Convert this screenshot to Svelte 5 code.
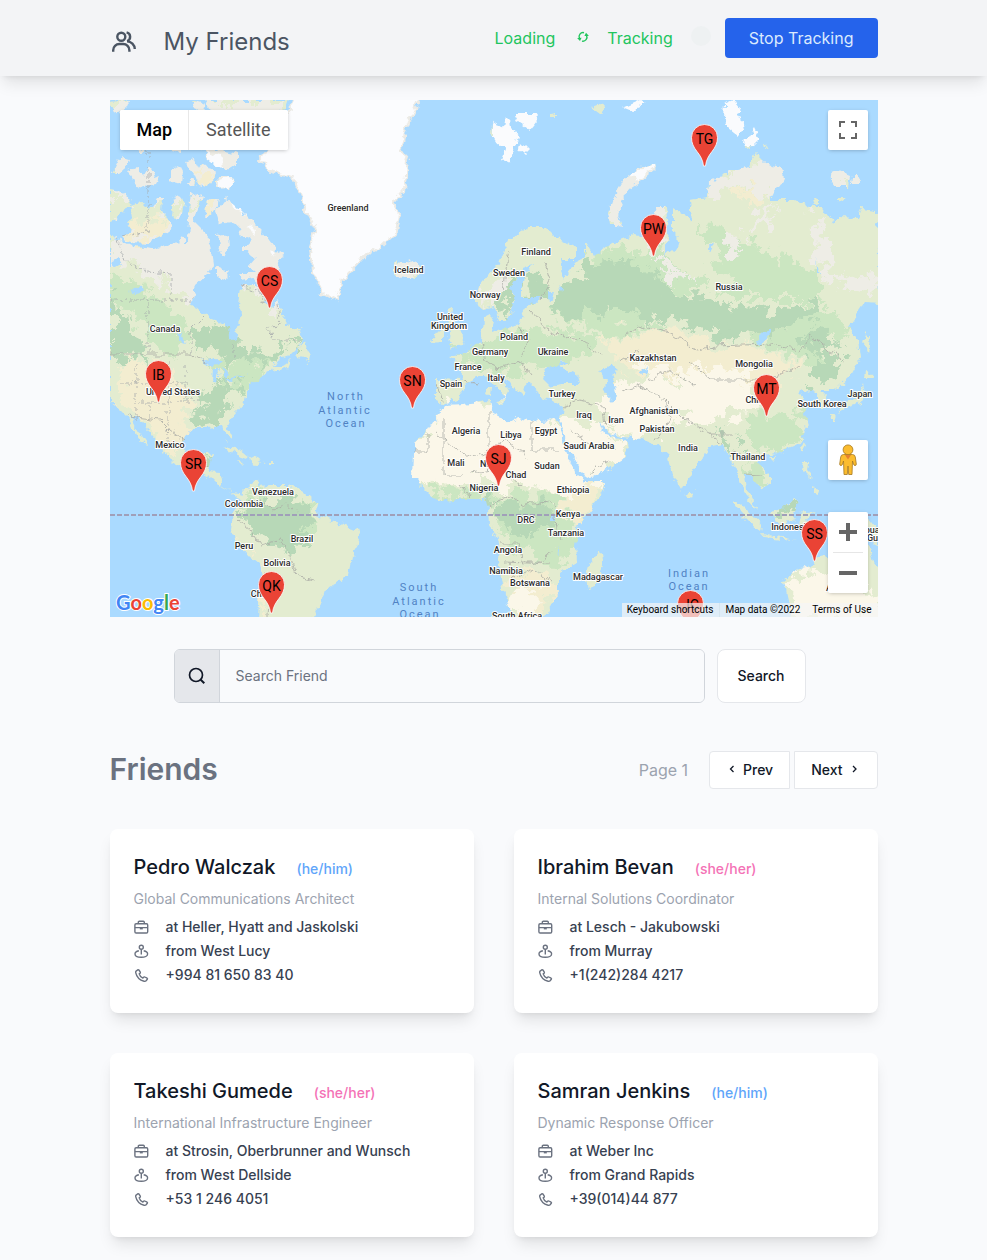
<script>
  const friends = [
    { name: 'Pedro Walczak', pronoun: 'he/him', tone: 'blue', title: 'Global Communications Architect', company: 'Heller, Hyatt and Jaskolski', city: 'West Lucy', phone: '+994 81 650 83 40' },
    { name: 'Ibrahim Bevan', pronoun: 'she/her', tone: 'pink', title: 'Internal Solutions Coordinator', company: 'Lesch - Jakubowski', city: 'Murray', phone: '+1(242)284 4217' },
    { name: 'Takeshi Gumede', pronoun: 'she/her', tone: 'pink', title: 'International Infrastructure Engineer', company: 'Strosin, Oberbrunner and Wunsch', city: 'West Dellside', phone: '+53 1 246 4051' },
    { name: 'Samran Jenkins', pronoun: 'he/him', tone: 'blue', title: 'Dynamic Response Officer', company: 'Weber Inc', city: 'Grand Rapids', phone: '+39(014)44 877' },
  ];

  // Pin tips in map units
  const pins = [
    ['TG', 594, 66], ['PW', 543, 156], ['CS', 159, 208], ['IB', 48, 302], ['SN', 302, 308],
    ['MT', 656, 316], ['SR', 83, 391], ['SJ', 388, 386], ['SS', 704, 461], ['QK', 161, 513], ['JC', 580, 532],
  ];

  const places = [
    ['Greenland', 238, 111], ['Iceland', 299, 173], ['Finland', 426, 155], ['Sweden', 399, 176], ['Norway', 375, 198],
    ['United', 340, 220], ['Kingdom', 339, 229], ['Poland', 404, 240], ['Germany', 380, 255], ['Ukraine', 443, 255],
    ['Russia', 619, 190], ['Kazakhstan', 543, 261], ['Mongolia', 644, 267], ['Canada', 55, 232], ['United States', 63, 295],
    ['Mexico', 60, 348], ['France', 358, 270], ['Spain', 341, 287], ['Italy', 386, 281], ['Turkey', 452, 297],
    ['Iraq', 474, 318], ['Iran', 506, 323], ['Afghanistan', 544, 314], ['Pakistan', 547, 332], ['China', 647, 303],
    ['South Korea', 712, 307], ['Japan', 750, 297], ['India', 578, 351], ['Thailand', 638, 360], ['Algeria', 356, 334],
    ['Libya', 401, 338], ['Egypt', 436, 334], ['Saudi Arabia', 479, 349], ['Mali', 346, 366], ['Niger', 381, 367],
    ['Chad', 406, 378], ['Sudan', 437, 369], ['Nigeria', 374, 391], ['Ethiopia', 463, 393], ['Kenya', 458, 417],
    ['DRC', 416, 423], ['Tanzania', 456, 436], ['Angola', 398, 453], ['Namibia', 396, 474], ['Botswana', 420, 486],
    ['Madagascar', 488, 480], ['South Africa', 407, 519], ['Venezuela', 163, 395], ['Colombia', 134, 407], ['Brazil', 192, 442],
    ['Peru', 134, 449], ['Bolivia', 167, 466], ['Chile', 151, 497], ['Indonesia', 681, 430], ['Australia', 734, 491],
    ['Papua New', 767, 433], ['Guinea', 771, 441],
  ];

  const seas = [
    ['North', 236, 300], ['Atlantic', 235, 314], ['Ocean', 236, 327],
    ['South', 309, 491], ['Atlantic', 309, 505], ['Ocean', 310, 518],
    ['Indian', 579, 477], ['Ocean', 579, 490],
  ];

  const land = [
    // North America
    'M0 134L7 138 25 147 45 149 60 143 78 142 79 120 78 110 80 95 88 93 93 98 85 115 84 122 97 135 100 145 103 165 98 175 85 187 82 200 85 208 100 218 118 225 119 238 125 243 128 235 127 226 133 215 128 205 130 186 143 185 152 190 155 205 163 208 167 200 172 215 178 225 190 230 193 238 190 245 178 257 165 262 160 272 148 278 140 285 135 295 133 305 120 320 117 327 122 338 120 341 115 333 112 326 95 328 83 328 74 335 72 343 74 353 80 362 90 363 95 355 102 353 100 362 97 372 110 373 113 380 112 388 120 392 130 393 132 400 122 393 108 385 100 377 88 370 70 365 55 357 51 345 42 335 34 325 27 317 20 316 27 330 38 346 34 345 24 332 18 318 10 310 0 303Z',
    // Newfoundland, Maritimes
    'M190 246L195 243 197 250 201 253 199 262 194 259 187 258Z',
    'M160 266L172 266 180 260 177 268 165 273Z',
    // Canadian Arctic islands
    'M0 90L12 92 22 100 18 108 10 112 6 120 0 122Z',
    'M20 105L32 102 40 110 47 98 53 98 52 112 58 118 63 128 55 134 46 138 38 143 22 142 12 138 22 130 18 125 22 118Z',
    'M2 72L8 60 14 56 21 58 18 66 10 72Z', 'M18 70L28 68 34 75 40 65 44 78 50 76 46 84 34 86 28 90 24 80Z',
    'M61 72L70 66 73 72 72 82 66 84 61 80Z', 'M77 82L82 78 85 84 80 88Z', 'M62 99L70 96 76 104 74 114 68 120 62 112Z',
    'M76 62L84 60 88 68 96 64 104 74 98 86 88 84 84 74Z', 'M104 82L110 76 120 76 124 82 120 88 108 89Z',
    'M82 36L95 40 96 50 86 48Z', 'M60 40L72 42 70 52 62 50Z', 'M28 46L36 52 30 56Z', 'M95 48L112 50 128 54 128 66 115 70 104 64 96 58Z',
    'M80 0L95 4 92 14 84 8Z', 'M95 0L178 0 175 8 160 14 150 30 145 45 125 50 105 40 110 22 100 14Z',
    'M100 98L108 98 106 112 110 124 120 122 132 128 128 134 140 138 135 150 145 158 138 166 145 172 130 172 132 180 142 178 152 182 158 186 163 178 170 168 168 160 175 156 166 150 160 142 150 130 142 122 132 112 124 104 116 98 110 106 96 118 97 104Z',
    'M108 136L117 134 118 148 114 158 108 154 110 146Z', 'M106 166L112 168 120 176 116 180 106 176Z', 'M132 146L137 146 136 152 132 152Z',
    'M70 136L76 138 76 142 72 143Z',
    // Cuba, Hispaniola
    'M113 349L122 347 133 353 140 359 130 356 120 351Z', 'M140 361L146 358 153 361 146 364 140 363Z', 'M158 361L162 361 162 363 158 363Z', 'M128 361L133 362 131 364Z',
    // South America
    'M132 393L140 385 147 381 148 386 160 385 178 385 190 390 202 398 208 405 206 415 220 420 235 425 248 430 251 440 242 455 238 475 225 485 215 490 210 505 200 520 148 520 150 490 152 475 148 462 138 455 125 440 120 430 122 415 127 408 130 400Z',
    // Africa
    'M333 305L353 304 379 301 381 312 389 317 403 322 409 317 429 321 448 320 449 329 456 350 464 370 474 382 496 382 489 397 469 424 466 444 467 460 449 474 449 490 443 504 433 520 403 520 393 490 388 460 389 444 379 424 378 407 376 399 366 399 349 399 329 402 316 390 303 377 304 354 304 344 319 329Z',
    'M491 450L493 460 486 487 479 489 476 479 479 464Z',
    // Europe and Asia
    'M326 279L353 280 349 264 340 258 350 256 360 247 372 240 374 217 380 214 384 218 380 232 409 225 413 213 419 203 433 198 413 198 413 180 423 163 413 167 401 187 404 203 398 222 389 222 384 207 371 210 366 200 369 187 389 163 399 140 419 127 436 127 446 137 466 147 466 160 449 160 453 180 459 170 469 160 476 156 476 143 484 156 503 143 524 135 539 137 542 120 547 107 557 107 559 133 554 157 562 150 572 143 562 133 562 107 582 120 580 100 597 97 599 83 619 72 639 67 645 53 655 63 672 67 674 80 659 100 685 100 699 107 712 107 724 125 729 117 749 118 752 108 768 110 770 204 755 203 739 227 748 240 750 257 739 277 725 290 712 290 720 307 712 307 707 294 692 289 689 297 697 302 694 314 698 327 689 344 665 354 652 357 649 364 660 374 660 384 650 390 644 377 635 374 637 390 647 410 635 397 630 380 624 367 612 344 599 347 585 367 572 392 562 374 557 354 545 344 532 339 512 337 500 334 489 323 493 334 512 340 520 347 512 360 489 374 474 378 464 357 453 334 450 325 453 307 440 299 429 297 426 289 417 283 413 297 403 287 395 276 389 274 399 290 396 298 383 284 376 276 366 276 356 284 349 300 333 303 326 300Z',
    'M336 211L342 208 341 218 348 228 351 235 355 243 338 249 343 243 338 239 344 234 338 224Z', 'M324 234L333 230 333 242 322 243Z',
    'M284 162L292 164 302 160 308 164 312 172 304 178 292 178 284 172Z', 'M376 288L380 288 379 298 375 296Z', 'M388 300L396 299 394 304Z',
    // Arctic archipelagos
    'M383 22L392 28 394 18 400 20 402 30 410 36 404 46 402 52 400 64 392 60 396 50 388 44 382 34Z', 'M404 14L416 14 424 14 428 20 420 30 408 22Z', 'M411 42L419 50 415 54 410 50Z',
    'M482 8L492 4 496 6 490 14Z', 'M441 14L446 13 446 17 441 17Z',
    'M498 112L504 95 512 82 530 68 545 62 546 68 532 80 520 88 512 100 508 116 512 126 500 124Z',
    'M615 4L624 0 630 8 626 16 632 18 634 30 628 36 618 28 614 18Z', 'M636 40L644 28 650 40 644 46 634 48Z', 'M653 44L658 46 654 48Z',
    'M720 74L730 72 740 76 738 86 724 86Z', 'M742 76L750 76 748 84 741 84Z', 'M728 98L736 98 734 102 728 101Z', 'M702 99L709 98 709 104 704 106Z', 'M0 2L18 0 14 10 4 14Z', 'M512 8L530 0 536 2 522 12Z',
    // Sakhalin, Japan, Philippines, Indonesia, Australia
    'M756 232L760 236 758 254 754 244Z', 'M755 270L763 274 764 280 754 280Z', 'M753 283L755 292 752 302 740 306 728 312 734 304 744 298 750 290Z', 'M720 314L726 314 724 320 721 320Z',
    'M694 342L697 344 694 351 692 346Z', 'M694 362L699 362 698 372 704 378 698 376 692 370Z', 'M702 388L710 390 709 397 702 394Z', 'M660 357L666 357 664 361Z', 'M579 390L583 393 582 398 577 396Z',
    'M622 400L632 404 644 416 653 426 652 432 642 424 630 412Z', 'M652 434L666 436 676 438 686 440 672 439 654 437Z', 'M661 412L672 410 684 397 690 402 684 412 682 422 668 424Z',
    'M690 414L706 412 696 418 702 428 694 424 692 430 688 424Z', 'M740 418L768 424 768 448 760 440 748 432Z',
    'M674 480L686 470 699 467 704 458 714 456 730 462 738 474 746 470 752 446 759 444 764 462 770 470 770 520 682 520 679 504Z',
  ];

  const tundra = [
    'M0 125L40 130 100 100 180 100 180 190 163 215 150 190 128 184 130 210 118 220 85 205 60 185 30 170 0 160Z', 'M0 0H180V100H0Z',
    'M595 70L675 55 680 90 655 98 640 84 600 98Z', 'M632 130L650 110 665 104 660 122 640 140Z', 'M702 110L722 124 716 150 720 170 740 180 765 176 768 196 740 190 712 176 706 150Z',
    'M498 60H550V128H498Z', 'M612 138L625 130 632 148 622 160Z', 'M540 160L560 165 580 175 560 182Z', 'M536 120L556 108 552 150 540 155Z', 'M366 190L392 175 394 200 370 206Z', 'M284 160H312V178H284Z', 'M720 70H768V90H720Z',
  ];

  const forest = [
    'M0 190L8 205 22 232 38 250 20 262 0 250Z', 'M80 232L118 226 135 250 155 255 170 240 190 246 165 262 145 268 120 258 85 252Z', 'M82 312L100 308 120 304 112 318 90 322Z',
    'M90 300L102 290 124 280 135 278 118 292 104 312Z', 'M90 362L102 353 100 366Z',
    'M458 180L480 165 520 160 540 172 560 190 610 200 625 215 650 212 700 200 712 216 680 222 650 236 620 240 590 228 548 216 500 208 460 222 440 212Z',
    'M413 178L430 165 440 182 430 196 414 198Z', 'M396 180L410 172 402 200 396 218 386 210Z', 'M690 236L712 226 730 245 705 255Z',
    'M130 410L155 398 175 396 200 408 205 420 190 432 200 445 180 452 150 440 140 430 125 420Z', 'M380 402L398 396 412 408 440 404 444 420 420 436 396 426 382 422Z',
    'M700 257L740 257 720 280 700 286Z', 'M608 330L622 332 630 345 622 360 612 344Z', 'M661 412L684 397 688 404 672 420Z', 'M600 215L640 205 650 220 610 232Z',
  ];

  const meadow = [
    'M0 175L35 185 60 210 85 240 60 255 40 240 20 210 0 195Z', 'M100 260L160 262 140 288 110 286Z', 'M135 395L210 405 200 445 150 440Z', 'M318 385L340 388 376 392 376 399 330 402Z',
    'M378 396L450 394 466 440 450 470 400 445Z', 'M640 315L690 312 696 330 680 350 640 346Z', 'M590 120L700 170 710 200 620 200Z', 'M480 150L540 145 600 190 500 190Z',
    'M340 250L430 225 500 240 460 262 380 275Z', 'M630 360L658 372 650 390Z', 'M440 215L520 208 560 225 500 236Z', 'M640 240L720 205 740 230 700 262Z',
  ];

  const dry = [
    'M8 262L40 262 78 285 80 310 72 330 40 330 10 305Z', 'M40 320L74 322 72 350 52 350Z', 'M500 238L560 228 600 245 650 250 690 262 670 285 600 290 560 275 510 268Z',
    'M118 425L135 445 152 470 156 517 148 517 146 465Z', 'M455 395L495 384 470 424 455 410Z', 'M396 470L440 474 450 490 430 517 404 517Z', 'M85 70L105 85 96 92 80 82Z', 'M20 125L55 120 60 140 20 142Z',
    'M97 100L108 98 106 115 97 120Z', 'M624 92L645 86 652 98 636 106Z', 'M520 240L548 240 560 262 520 262Z',
  ];

  const desert = [
    'M333 305L379 301 450 318 470 372 496 382 455 398 420 384 340 384 303 380 303 340Z', 'M450 322L489 322 520 345 500 374 472 378Z', 'M495 285L560 275 565 300 560 338 520 338 495 325Z',
    'M548 290L600 280 650 288 640 310 600 322 566 312Z', 'M396 490L430 486 425 517 404 517Z', 'M684 470L740 475 770 500 770 520 680 520Z', 'M560 268L640 270 640 284 580 288Z', 'M530 262L560 262 555 280 535 278Z',
  ];

  const greenland = 'M183 0L178 13 157 50 150 60 160 72 183 77 192 97 197 113 206 130 200 147 202 170 213 193 227 200 233 180 256 155 270 148 286 133 289 113 283 103 294 90 298 60 291 50 296 30 302 16 312 -4L183 -4Z';
  const ice = ['M108 80L120 76 124 86 110 88Z', 'M96 52L110 55 112 68 98 64Z', 'M138 126L146 130 144 136Z', 'M158 148L166 152 164 158Z', 'M498 0H545V16H498Z', 'M522 74L545 62 546 66 526 82Z', 'M383 14H430V64H383Z', 'M614 0H650V46H614Z', 'M120 100L132 112 138 118 122 106Z'];

  const lakes = [
    'M92 260L104 257 112 264 104 266 98 264Z', 'M104 268L108 268 106 284 103 280Z', 'M112 267L120 272 116 280 113 274Z', 'M116 282L126 277 122 283Z', 'M126 276L136 274 130 278Z', 'M68 234L72 234 76 246 72 244Z', 'M20 192L28 186 36 190 26 194Z', 'M0 162L8 158 12 164 2 168Z',
    'M432 278L436 268 446 264 456 270 468 274 470 284 452 284 440 286Z', 'M448 264L458 260 456 266Z', 'M490 272L500 264 508 270 502 280 506 296 502 302 494 292 496 282Z', 'M530 272L538 268 536 276Z',
    'M438 190L444 190 442 200 438 198Z', 'M449 184L453 188 452 194Z', 'M646 242L660 226 661 232 650 244Z', 'M704 160L712 174 708 174Z', 'M598 146L604 143 600 152Z', 'M441 415L447 415 446 421 441 421Z', 'M448 444L450 456 448 452Z',
  ];

  const borders = [
    'M0 200H82', 'M38 200V255', 'M61 173V200', 'M7 138L14 160 38 172 61 174', 'M38 50V132L10 137', 'M81 254V230L95 216', 'M124 258V244', 'M167 205L170 225 158 228 162 240 190 240', 'M130 186L150 192 155 205',
    'M26 262V320', 'M40 300V318', 'M58 262V345', 'M26 302H80', 'M10 283H80', 'M75 265V300H90',
  ];
  const lines = [
    'M0 254H80L98 262', 'M18 316L50 320 60 330 74 340', 'M90 370L97 364', 'M150 400L165 410 176 404 186 410', 'M128 420L140 430 150 445 170 440 180 455 186 475 205 480', 'M154 470L160 490 158 517',
    'M326 333L345 350 365 358 395 340 420 358', 'M379 312V345', 'M422 320V350H448', 'M334 318V375H350', 'M303 352H318V334', 'M360 374L390 368 410 385', 'M350 385L360 398', 'M378 405L400 396 415 405 440 402', 'M390 443H410L412 462H432L440 450', 'M444 402L446 430 450 440', 'M400 480L425 470 440 480', 'M395 462L440 464',
    'M453 308L470 300 492 305 495 325', 'M460 330L480 345 505 348', 'M480 372L500 360', 'M326 283L332 300', 'M353 281L368 284', 'M372 240L376 262 388 268 410 262 420 275', 'M409 226L420 240 410 256', 'M420 210L440 232 470 240 492 255', 'M430 200L440 180 436 165', 'M399 150L392 190', 'M512 236L535 226 560 232 585 250 605 246 660 244 690 250 700 236 735 262',
    'M510 262L530 250', 'M512 290L530 285 555 300 560 320 545 340', 'M555 300L575 320 600 334 622 334', 'M612 344L600 335', 'M580 262L600 280 660 280 690 265', 'M540 280L560 270 585 285', 'M624 350L640 360 655 357', 'M635 374L650 375',
  ];
</script>

<svelte:head><title>My Friends</title></svelte:head>

<header>
  <div class="wrap bar">
    <div class="brand">
      <svg width="24" height="22" viewBox="0 0 24 22" fill="none" stroke="currentColor" stroke-width="2.4" aria-hidden="true">
        <circle cx="9.3" cy="5.7" r="4" />
        <path d="M1.2 20.800v-1.600a6.2 6.2 0 0 1 6.2-6.2h3.800a6.2 6.2 0 0 1 6.2 6.2v1.600M14.600 1.300a4.600 4.600 0 0 1 .5 8.800M15 10.400c4.400 0 7.500 3.300 7.800 7.600" />
      </svg>
      <h1>My Friends</h1>
    </div>
    <div class="status">
      <span>Loading</span>
      <svg class="sync" width="12" height="12" viewBox="0 0 12 12" fill="none" stroke="currentColor" stroke-width="1.400" aria-hidden="true">
        <path d="M7 1.700A4 4 0 0 0 2.500 7.400M5 10.100A4 4 0 0 0 9.500 4.400" />
        <path d="M.1 6.900L4.600 6.700 3 10ZM11.900 4.900L7.400 5.100 9 1.800Z" fill="currentColor" stroke="none" />
      </svg>
      <span>Tracking</span>
      <i class="pulse"></i>
      <button class="stop" type="button">Stop Tracking</button>
    </div>
  </div>
</header>

<main class="wrap">
  <section class="map" aria-label="Map">
    <svg class="canvas" viewBox="0 0 768 517" preserveAspectRatio="xMidYMid slice">
      <defs>
        <clipPath id="land">{#each land as d}<path {d} />{/each}</clipPath>
        <filter id="coast" x="0" y="0" width="100%" height="100%">
          <feTurbulence type="fractalNoise" baseFrequency="0.13" numOctaves="3" seed="4" result="n" />
          <feDisplacementMap in="SourceGraphic" in2="n" scale="9" xChannelSelector="R" yChannelSelector="G" />
        </filter>
        <filter id="patch" x="0" y="0" width="100%" height="100%">
          <feTurbulence type="fractalNoise" baseFrequency="0.07" numOctaves="4" seed="9" result="n" />
          <feDisplacementMap in="SourceGraphic" in2="n" scale="36" xChannelSelector="R" yChannelSelector="G" />
        </filter>
      </defs>
      <rect width="768" height="517" fill="#aadaff" />
      <g filter="url(#coast)">
        <g clip-path="url(#land)">
          <rect width="770" height="520" fill="#e3ecd0" />
          <g filter="url(#patch)">
            {#each meadow as d}<path {d} fill="#cbe6c1" />{/each}
            {#each tundra as d}<path {d} fill="#eeede6" />{/each}
            {#each dry as d}<path {d} fill="#f3edd0" />{/each}
            {#each forest as d}<path {d} fill="#b7d8b7" />{/each}
            {#each desert as d}<path {d} fill="#fbf7e9" />{/each}
          </g>
          {#each ice as d}<path {d} fill="#fafbfd" />{/each}
        </g>
        <path d={greenland} fill="#fbfcfe" stroke="#ecebe6" stroke-width="2" />
        {#each lakes as d}<path {d} fill="#aadaff" />{/each}
        <path d={lines.join('')} fill="none" stroke="#a9aba4" stroke-width=".8" />
        <path d={borders.join('')} fill="none" stroke="#a5a8ab" stroke-width=".8" stroke-dasharray="3 2" />
      </g>
      <path d="M0 415H768" stroke="#a09fb9" stroke-width="2" stroke-dasharray="5 2" />
      <g class="sea">{#each seas as [t, x, y]}<text {x} {y}>{t}</text>{/each}</g>
      <g class="place">{#each places as [t, x, y]}<text {x} {y}>{t}</text>{/each}</g>
      {#each pins as [t, x, y]}
        <g transform="translate({x + 0.5} {y})">
          <path d="M-1 0C-1.600-6-4-10-7.500-14.500-11-19-13-23-13-28.500a13 13 0 0 1 26 0C13-23 11-19 7.500-14.500 4-10 1.600-6 1 0Z" fill="#ea4335" stroke="#fff" stroke-width=".8" />
          <text class="initials" y="-22">{t}</text>
        </g>
      {/each}
      <text class="logo" x="6" y="510"><tspan fill="#4285f4">G</tspan><tspan fill="#ea4335">o</tspan><tspan fill="#fbbc04">o</tspan><tspan fill="#4285f4">g</tspan><tspan fill="#34a853">l</tspan><tspan fill="#ea4335">e</tspan></text>
    </svg>

    <div class="types">
      <button type="button" class="active">Map</button>
      <button type="button">Satellite</button>
    </div>
    <button type="button" class="tile full" aria-label="Toggle fullscreen view">
      <svg width="18" height="18" viewBox="0 0 18 18" fill="#666"><path d="M0 0v6h2V2h4V0zM12 0v2h4v4h2V0zM16 16h-4v2h6v-6h-2zM2 12H0v6h6v-2H2z" /></svg>
    </button>
    <div class="tools">
      <button type="button" class="tile" aria-label="Street View Pegman">
        <svg width="18" height="32" viewBox="0 0 18 32" fill="#fbbc2e" stroke="#a6791f" stroke-width=".8">
          <path d="M4.500 10.500H13.500Q16 10.500 16.300 13L17.300 20Q17.400 21.500 16 21.500 14.800 21.500 14.500 20L13.500 17 13 30.500H9.700L9 22 8.300 30.500H5L4.500 17 3.500 20Q3.200 21.500 2 21.500 .6 21.500 .7 20L1.700 13Q2 10.500 4.500 10.500Z" />
          <circle cx="9" cy="5.800" r="4.900" />
          <path d="M6 11H12L9 15.500Z" fill="#e6812e" stroke="none" />
        </svg>
      </button>
      <div class="zoom">
        <button type="button" aria-label="Zoom in"><svg width="18" height="18" viewBox="0 0 18 18" fill="#666"><path d="M7 0h4v7h7v4h-7v7H7v-7H0V7h7z" /></svg></button>
        <button type="button" aria-label="Zoom out"><svg width="18" height="18" viewBox="0 0 18 18" fill="#666"><path d="M0 7h18v4H0z" /></svg></button>
      </div>
    </div>
    <div class="legal">
      <button type="button">Keyboard shortcuts</button>
      <span>Map data ©2022</span>
      <a href="#terms">Terms of Use</a>
    </div>
  </section>

  <form class="search" onsubmit={(e) => e.preventDefault()}>
    <div class="field">
      <label for="q" aria-label="Search Friend">
        <svg width="18" height="18" viewBox="0 0 18 18" fill="none" stroke="currentColor" stroke-width="1.700"><circle cx="8" cy="8" r="6.500" /><path d="M12.700 12.700L16.300 16.300" stroke-width="2" /></svg>
      </label>
      <input id="q" type="text" placeholder="Search Friend" />
    </div>
    <button type="submit">Search</button>
  </form>

  <div class="heading">
    <h2>Friends</h2>
    <div class="pager">
      <span>Page 1</span>
      <button type="button" class="prev">
        <svg width="12" height="12" viewBox="0 0 12 12" fill="none" stroke="currentColor" stroke-width="1.300"><path d="M7.500 2L4.500 5 7.500 8" /></svg>
        Prev
      </button>
      <button type="button" class="next">
        Next
        <svg width="12" height="12" viewBox="0 0 12 12" fill="none" stroke="currentColor" stroke-width="1.300"><path d="M4 2L7 5 4 8" /></svg>
      </button>
    </div>
  </div>

  <div class="cards">
    {#each friends as f}
      <article>
        <div class="who">
          <h3>{f.name}</h3>
          <span class={f.tone}>({f.pronoun})</span>
        </div>
        <p class="title">{f.title}</p>
        <ul>
          <li>
            <svg width="16" height="16" viewBox="0 0 16 16" fill="none" stroke="currentColor" stroke-width="1.400" aria-hidden="true"><rect x=".9" y="4.700" width="12.800" height="9.300" rx="1.200" /><path d="M4.300 4.700V3.300q0-1 1-1h4q1 0 1 1v1.400M.9 8.600h12.800" /><path d="M5.800 8.400h3v2h-3z" fill="currentColor" stroke="none" /></svg>
            at {f.company}
          </li>
          <li>
            <svg width="16" height="16" viewBox="0 0 16 16" fill="none" stroke="currentColor" stroke-width="1.400" aria-hidden="true"><circle cx="7.300" cy="4.200" r="2" /><path d="M7.300 6.200v5.300M4.900 7.800C2.500 8.300 1 9.400 1 10.900c0 2 2.700 3.300 6.300 3.300s6.300-1.300 6.300-3.300c0-1.500-1.500-2.600-3.900-3.100" /></svg>
            from {f.city}
          </li>
          <li>
            <svg width="16" height="16" viewBox="0 0 16 16" fill="none" stroke="currentColor" stroke-width="1.400" stroke-linejoin="round" aria-hidden="true"><path d="M2.100 4.100L3.900 2.700q.6-.3 1 .3L6.300 5.200q.3.600-.2 1L5.200 6.900q.6 2.600 3.700 4.200l1-1q.5-.4 1-.1l2.200 1.200q.7.500.2 1.100l-1.200 1.500q-.7.800-2 .5Q3.200 12.600 1.700 5.700q-.2-1 .4-1.600Z" /></svg>
            {f.phone}
          </li>
        </ul>
      </article>
    {/each}
  </div>
</main>

<style>
  :global(body) { background: #f9fafc; color: #111827; font-family: Inter, sans-serif; font-size: 14px; line-height: 20px; }
  h1, h2, h3, p, ul { margin: 0; padding: 0; }
  button { font: inherit; color: inherit; border: 0; padding: 0; background: #fff; cursor: pointer; }
  svg { display: block; flex: none; }
  .wrap { max-width: 768px; margin: 0 auto; }

  header { background: #f3f4f6; box-shadow: 0 10px 15px -3px #0000001a, 0 4px 6px -4px #0000001a; }
  .bar { display: flex; justify-content: space-between; align-items: center; height: 76px; }
  .brand { display: flex; align-items: center; gap: 28px; padding: 8px 0 0 2px; color: #4b5563; }
  h1 { font-size: 24px; line-height: 32px; font-weight: 400; }
  .status { display: flex; align-items: center; color: #22c55e; font-size: 16px; line-height: 24px; }
  .sync { margin: 0 18px 2px 22px; }
  .pulse { width: 20px; height: 20px; border-radius: 50%; background: #eef1f2; margin: 0 14px 4px 18px; }
  .stop { background: #2563eb; color: #dbeafe; border-radius: 4px; height: 40px; padding: 0 24px; }

  .map { position: relative; margin-top: 24px; height: 517px; overflow: hidden; font-family: Roboto, sans-serif; }
  .canvas { width: 100%; height: 100%; }
  .place text { font-size: 9px; font-weight: 500; fill: #2b2b2b; stroke: #fff; stroke-width: 2px; stroke-linejoin: round; paint-order: stroke; text-anchor: middle; }
  .sea text { font-size: 11px; letter-spacing: 2px; fill: #5082c4; text-anchor: middle; }
  .initials { font-size: 14px; text-anchor: middle; fill: #000; }
  .logo { font-family: Lato, sans-serif; font-size: 20px; font-weight: 700; stroke: #fff; stroke-width: 2px; paint-order: stroke; }
  .types, .tile, .zoom { background: #fff; border-radius: 2px; box-shadow: 0 1px 4px -1px #0000004d; }
  .types { position: absolute; left: 10px; top: 10px; display: flex; overflow: hidden; font-size: 18px; }
  .types button { height: 40px; padding: 0 17px; color: #565656; }
  .types .active { color: #000; font-weight: 500; box-shadow: inset -1px 0 #e8e8e8; }
  .tile { display: grid; place-items: center; width: 40px; height: 40px; }
  .full { position: absolute; right: 10px; top: 10px; }
  .tools { position: absolute; right: 10px; bottom: 24px; display: grid; gap: 32px; }
  .zoom { display: grid; }
  .zoom button { display: grid; place-items: center; width: 40px; height: 40px; background: none; }
  .zoom button + button { position: relative; margin-top: 1px; }
  .zoom button + button::before { content: ''; position: absolute; left: 5px; right: 5px; top: -1px; height: 1px; background: #e6e6e6; }
  .legal { position: absolute; right: 0; bottom: 0; display: flex; font-size: 10px; line-height: 14px; color: #000; }
  .legal > * { background: #f5f5f5b3; padding: 0 6px 0 5px; color: inherit; text-decoration: none; }
  .legal a { padding-left: 6px; }
  .legal button { border-right: 1px solid #d5e4ee; }

  .search { display: flex; gap: 12px; margin: 32px 72px 0 64px; height: 54px; }
  .field { flex: 1; display: flex; border: 1px solid #d1d5db; border-radius: 6px; overflow: hidden; }
  .field label { display: grid; place-items: center; width: 44px; background: #e5e7eb; border-right: 1px solid #d1d5db; }
  input { flex: 1; min-width: 0; border: 0; padding: 0 16px; background: #f9fafc; font: inherit; outline: 0; }
  input::placeholder { color: #6b7280; opacity: 1; }
  .search button { border: 1px solid #e5e7eb; border-radius: 8px; padding: 0 20px 0 19px; font-weight: 500; }

  .heading { display: flex; justify-content: space-between; align-items: center; margin-top: 48px; }
  h2 { font-size: 30px; line-height: 36px; font-weight: 600; color: #6b7280; padding-bottom: 2px; }
  .pager { display: flex; align-items: center; gap: 4px; }
  .pager span { color: #9ca3af; font-size: 16px; margin-right: 17px; }
  .pager button { display: flex; align-items: center; gap: 5px; height: 38px; padding: 0 16px; border: 1px solid #e5e7eb; font-weight: 500; }
  .prev { border-radius: 4px 0 0 4px; }
  .pager .next { border-radius: 0 4px 4px 0; gap: 6px; }

  .cards { display: grid; grid-template-columns: 1fr 1fr; gap: 40px; margin: 40px 0; }
  article { background: #fff; border-radius: 8px; padding: 24px 24px 28px; box-shadow: 0 10px 15px -3px #0000001a, 0 4px 6px -4px #0000001a; }
  .who { display: flex; align-items: baseline; gap: 21px; }
  h3 { font-size: 20px; line-height: 28px; font-weight: 500; }
  .who span { font-weight: 500; }
  .blue { color: #60a5fa; }
  .pink { color: #f472b6; }
  .title { margin-top: 8px; color: #9ca3af; }
  ul { list-style: none; display: grid; gap: 4px; margin-top: 8px; }
  li { display: flex; align-items: center; gap: 16px; color: #374151; font-weight: 500; }
  li svg { color: #6b7280; }
</style>
